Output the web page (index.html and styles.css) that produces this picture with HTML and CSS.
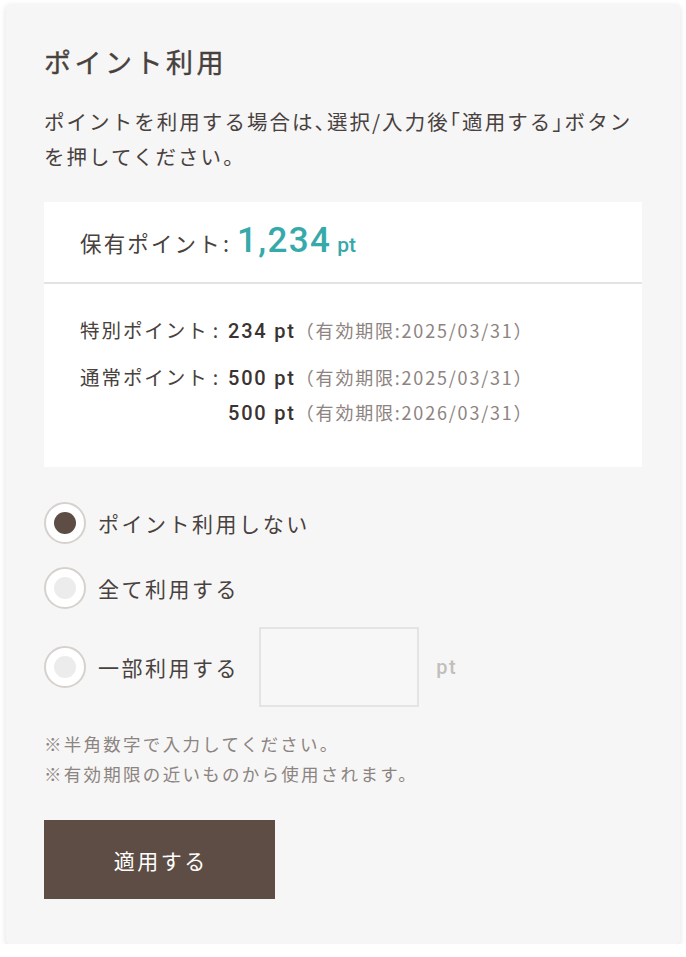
FILE: index.html
```html
<!DOCTYPE html>
<html lang="ja">
<head>
<meta charset="utf-8">
<title>ポイント利用</title>
<link rel="stylesheet" href="styles.css">
</head>
<body>
<div class="card">
  <h2 class="title">ポイント利用</h2>
  <p class="desc">ポイントを利用する場合は<span class="pt-p">、</span>選択/入力後<span class="pt-p">「</span>適用する<span class="pt-p">」</span>ボタンを押してください。</p>

  <div class="points">
    <div class="points-total">
      <span class="total-label">保有ポイント</span><span class="total-colon">:</span>
      <span class="total-num">1,234</span>
      <span class="total-unit">pt</span>
    </div>
    <div class="points-detail">
      <div class="d-label">特別ポイント<span class="d-colon">:</span></div>
      <div class="d-val"><b>234 pt</b><span class="d-exp">（有効期限:2025/03/31）</span></div>
      <div class="d-label d-gap">通常ポイント<span class="d-colon">:</span></div>
      <div class="d-val d-gap"><b>500 pt</b><span class="d-exp">（有効期限:2025/03/31）</span></div>
      <div class="d-label"></div>
      <div class="d-val"><b>500 pt</b><span class="d-exp">（有効期限:2026/03/31）</span></div>
    </div>
  </div>

  <div class="options">
    <label class="opt opt-1"><span class="radio on"></span><span class="opt-text">ポイント利用しない</span></label>
    <label class="opt opt-2"><span class="radio"></span><span class="opt-text">全て利用する</span></label>
    <div class="opt opt-3"><span class="radio"></span><span class="opt-text">一部利用する</span><span class="input"></span><span class="input-unit">pt</span></div>
  </div>

  <div class="notes">
    <p>※半角数字で入力してください。</p>
    <p>※有効期限の近いものから使用されます。</p>
  </div>

  <button class="apply">適用する</button>
</div>
</body>
</html>
```

FILE: styles.css
```css
* { box-sizing: border-box; }
html, body { margin: 0; padding: 0; background: #ffffff; }
body {
  font-family: "Noto Sans CJK JP", "Noto Sans", sans-serif;
  color: #48413e;
}
.card {
  margin: 4px 6px 0 6px;
  width: 674px;
  height: 940px;
  background: #f6f6f6;
  border-radius: 4px;
  box-shadow: 0 2px 6px rgba(0,0,0,0.13);
  padding: 38px 38px 0 38px;
}
.title {
  margin: 0;
  font-size: 27px;
  line-height: 40px;
  font-weight: 400;
  letter-spacing: 0.13em;
  color: #48413e;
  -webkit-text-stroke: 0.4px #48413e;
}
.desc {
  margin: 22px 0 0 0;
  font-size: 20.5px;
  line-height: 35px;
  letter-spacing: 0.1em;
}
.pt-p { font-feature-settings: "halt"; }
.points {
  margin-top: 28px;
  background: #ffffff;
}
.points-total {
  height: 82px;
  border-bottom: 2px solid #e3e3e3;
  padding-left: 36px;
  display: flex;
  align-items: baseline;
  padding-top: 18px;
}
.total-label {
  font-size: 21.5px;
  letter-spacing: 0.1em;
}
.total-colon {
  font-size: 21.5px;
  margin-left: 1px;
}
.total-num {
  margin-left: 8px;
  font-family: Roboto, "Noto Sans", sans-serif;
  font-weight: 500;
  font-size: 35px;
  color: #36a9ab;
  letter-spacing: 0.04em;
}
.total-unit {
  font-family: Roboto, "Noto Sans", sans-serif;
  font-weight: 500;
  font-size: 21px;
  color: #36a9ab;
  margin-left: 6px;
}
.points-detail {
  display: grid;
  grid-template-columns: 148px 1fr;
  grid-template-rows: 35px 47px 35px;
  padding: 28px 0 38px 36px;
  font-size: 19.5px;
  line-height: 35px;
}
.d-label { letter-spacing: 0.1em; }
.d-colon { margin-left: 4px; }
.d-gap { padding-top: 12px; }
.d-val { white-space: nowrap; }
.d-val b {
  font-family: Roboto, "Noto Sans", sans-serif;
  font-weight: 500;
  font-size: 20px;
  letter-spacing: 0.09em;
  color: #3a3331;
}
.d-exp {
  font-size: 18px;
  color: #8d8481;
  letter-spacing: 0.1em;
}
.options {
  margin-top: 35px;
  display: flex;
  flex-direction: column;
}
.opt {
  display: flex;
  align-items: center;
  height: 42px;
}
.opt-2 { margin-top: 23px; }
.opt-3 { margin-top: 18px; height: 80px; }
.radio {
  width: 42px;
  height: 42px;
  border-radius: 50%;
  border: 2px solid #d6d1cd;
  background: #ffffff;
  display: flex;
  align-items: center;
  justify-content: center;
  flex-shrink: 0;
}
.radio::after {
  content: "";
  width: 22px;
  height: 22px;
  border-radius: 50%;
  background: #ececec;
}
.radio.on::after { background: #5d4d44; }
.opt-text {
  margin-left: 12px;
  font-size: 21px;
  letter-spacing: 0.12em;
  line-height: 30px;
}
.input {
  margin-left: 20px;
  width: 160px;
  height: 80px;
  border: 2px solid #e4e4e4;
  background: #f7f7f7;
}
.input-unit {
  margin-left: 17px;
  font-family: Roboto, "Noto Sans", sans-serif;
  font-weight: 500;
  font-size: 20px;
  letter-spacing: 0.08em;
  color: #c2bebb;
}
.notes {
  margin-top: 22px;
}
.notes p {
  margin: 0;
  font-size: 17.5px;
  line-height: 30px;
  letter-spacing: 0.13em;
  color: #8c8480;
}
.apply {
  display: block;
  margin-top: 31px;
  width: 231px;
  height: 79px;
  border: none;
  border-radius: 0;
  background: #5d4d44;
  color: #ffffff;
  font-family: "Noto Sans CJK JP", "Noto Sans", sans-serif;
  font-size: 21px;
  font-weight: 400;
  letter-spacing: 0.12em;
  padding: 0 0 0 0.12em;
}
```
